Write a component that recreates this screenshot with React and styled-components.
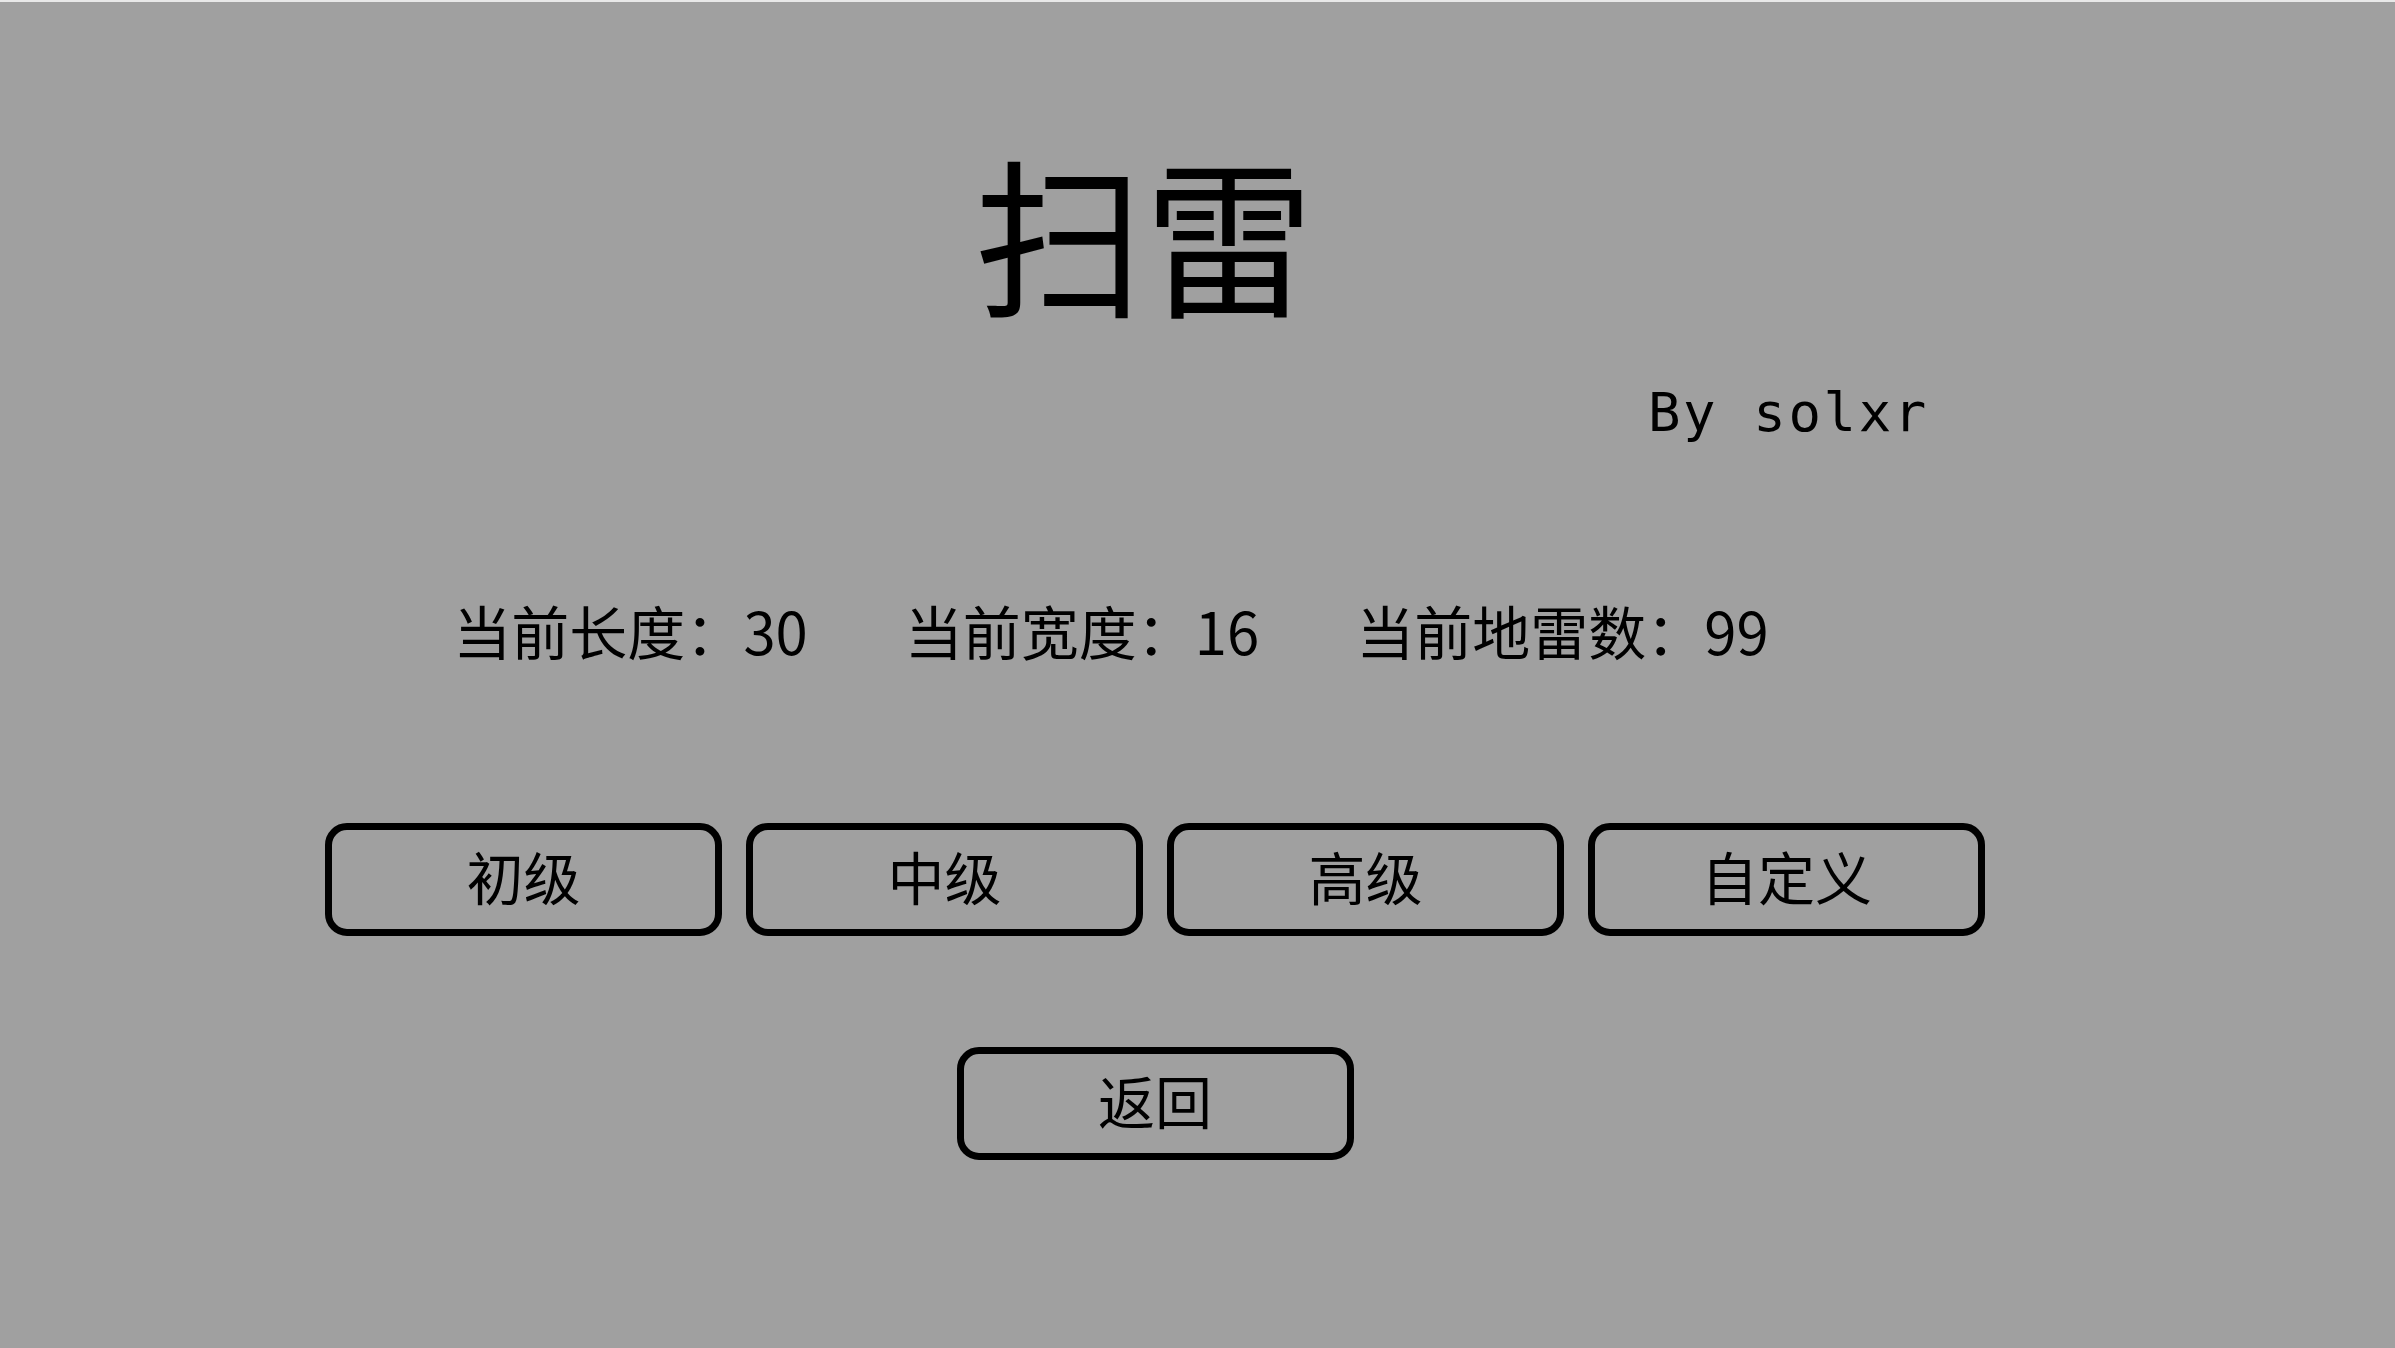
import styled, { createGlobalStyle } from "styled-components";

const GlobalStyle = createGlobalStyle`
  html, body {
    margin: 0;
    padding: 0;
  }
  body {
    background: #a0a0a0;
    font-family: "Noto Sans CJK SC", "Noto Sans", sans-serif;
  }
`;

const Screen = styled.main`
  box-sizing: border-box;
  width: 100%;
  height: 100vh;
  overflow: hidden;
  background: #a0a0a0;
  border-top: 2px solid #e8e8e8;
  padding: 144px 85px 0 0;
  display: flex;
  flex-direction: column;
  align-items: center;
  color: #000;
`;

const Title = styled.h1`
  margin: 0 22px 0 0;
  font-size: 170px;
  font-weight: 400;
  line-height: 1;
`;

const Author = styled.div`
  align-self: flex-start;
  margin: 70px 0 0 1648px;
  font-family: "DejaVu Sans Mono", "Liberation Mono", monospace;
  font-size: 54px;
  letter-spacing: 2.6px;
  line-height: 1;
  white-space: pre;
`;

const Stats = styled.div`
  margin: 161px 88px 0 0;
  display: flex;
  gap: 97px;
  font-size: 58px;
  line-height: 1;
`;

const Stat = styled.span`
  white-space: nowrap;
`;

const ButtonRow = styled.div`
  margin-top: 164px;
  display: flex;
  gap: 24px;
`;

const MenuButton = styled.button`
  box-sizing: border-box;
  width: 397px;
  height: 113px;
  padding: 0 0 8px;
  border: 7px solid #000;
  border-radius: 22px;
  background: transparent;
  color: #000;
  font-family: "Noto Sans CJK SC", sans-serif;
  font-size: 57px;
  line-height: 1;
  cursor: pointer;
`;

const BackButton = styled(MenuButton)`
  margin-top: 111px;
`;

const stats = [
  { label: "当前长度", value: 30 },
  { label: "当前宽度", value: 16 },
  { label: "当前地雷数", value: 99 },
];

const levels = ["初级", "中级", "高级", "自定义"];

export default function App() {
  return (
    <>
      <GlobalStyle />
      <Screen>
        <Title>扫雷</Title>
        <Author>By solxr</Author>

        <Stats>
          {stats.map((s) => (
            <Stat key={s.label}>
              {s.label}：{s.value}
            </Stat>
          ))}
        </Stats>

        <ButtonRow>
          {levels.map((name) => (
            <MenuButton key={name}>{name}</MenuButton>
          ))}
        </ButtonRow>

        <BackButton>返回</BackButton>
      </Screen>
    </>
  );
}
